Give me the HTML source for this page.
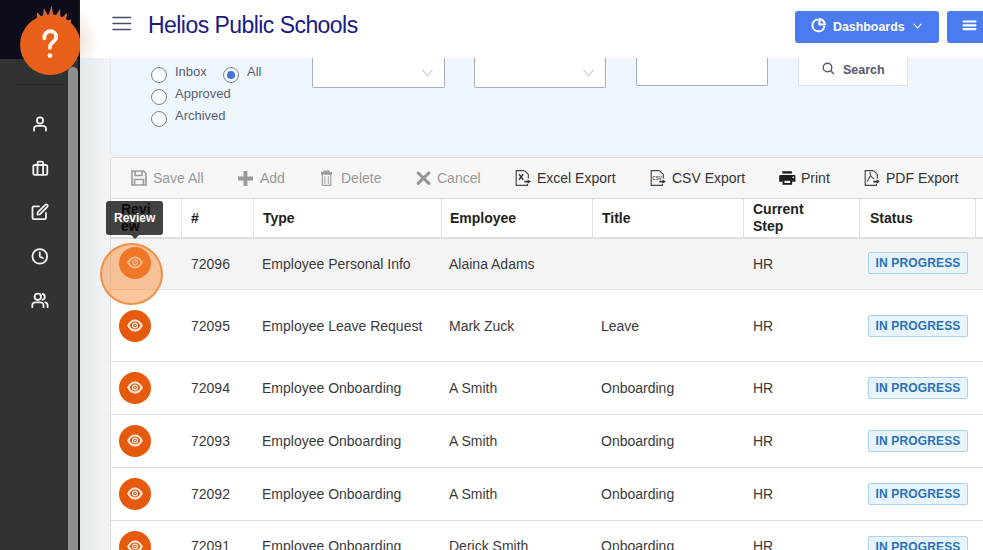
<!DOCTYPE html>
<html><head><meta charset="utf-8">
<style>
*{box-sizing:border-box;margin:0;padding:0}
html,body{width:983px;height:550px;overflow:hidden;background:#eff6fe;font-family:"Liberation Sans",sans-serif;position:relative}
.a{position:absolute}
#sbtop{left:0;top:0;width:80px;height:59px;background:#0d0c1a}
#sb{left:0;top:59px;width:68px;height:491px;background:#313332}
#sbdiv{left:15px;top:84px;width:49px;height:1px;background:#242626}
#scroll{left:68px;top:67px;width:10px;height:483px;background:#8b8f92;border-radius:5px 5px 0 0}
#scrolltrack{left:64px;top:59px;width:16px;height:491px;background:#313332}
#sbline{left:78px;top:0;width:2px;height:550px;background:#16181a}
#strip{left:80px;top:58px;width:31px;height:492px;background:linear-gradient(90deg,#e5eaed,#f1f4f6)}
#hdr{left:80px;top:0;width:903px;height:59px;background:#fff;border-bottom:1px solid #e4e7eb}
#title{left:148px;top:12px;font-size:23px;color:#181a86;white-space:nowrap;letter-spacing:-0.55px}
#dash{left:795px;top:11px;width:144px;height:32px;background:#4a7cef;border-radius:3px}
#dashtxt{left:833px;top:20px;color:#fff;font-weight:bold;font-size:12.4px;white-space:nowrap}
#menu2{left:947px;top:11px;width:50px;height:32px;background:#4a7cef;border-radius:3px}
.inp{background:#fff;border:1px solid #a7acc2;border-top:none;border-radius:0 0 2px 2px}
.rad{width:16px;height:16px;border-radius:50%;border:1px solid #7d819e;background:#fbfcfe}
.rlab{font-size:13px;color:#5a5f72;white-space:nowrap}
#panel{left:110px;top:58px;width:873px;height:98px;background:#eff6fe;border-radius:0 0 0 5px;border-left:1px solid #e1e8ef;border-bottom:1px solid #e1e8ef}
#grid{left:110px;top:157px;width:880px;height:400px;background:#fff;border:1px solid #dadada;border-radius:3px 0 0 0}
#tb{left:111px;top:158px;width:872px;height:41px;background:#f7f7f7;border-bottom:1px solid #dcdcdc}
.tbi{top:170px;font-size:14px;color:#333;white-space:nowrap}
.dis{color:#999}
.th{font-weight:bold;font-size:14px;color:#222;white-space:nowrap}
.td{font-size:14px;color:#3a3a3a;white-space:nowrap}
.vl{width:1px;background:#e2e2e2}
.hl{left:111px;width:872px;height:1px;background:#e0e0e0}
.badge{left:868px;width:100px;height:22px;background:#e8f4fc;border:1px solid #abd2ec;color:#2870b8;font-weight:bold;font-size:12px;letter-spacing:0.15px;text-align:center;line-height:20px;border-radius:2px}
.eye{left:119px;width:32px;height:32px;border-radius:50%;background:#e65a0e}
.eye svg{position:absolute;left:8px;top:9px}
</style></head><body>
<!-- sidebar -->
<div class="a" id="sbtop"></div>
<div class="a" id="sb"></div>
<div class="a" id="scrolltrack"></div>
<div class="a" id="sbdiv"></div>
<div class="a" id="scroll"></div>
<svg class="a" style="left:28px;top:110px" width="24" height="24" viewBox="0 0 24 24" fill="none" stroke="#f4f4f4" stroke-width="1.8" stroke-linecap="round"><circle cx="12" cy="10.5" r="3.1"/><path d="M6 20.5 V18.8 A3 3 0 0 1 9 15.8 H15 A3 3 0 0 1 18 18.8 V20.5"/></svg>
<svg class="a" style="left:28px;top:156px" width="24" height="24" viewBox="0 0 24 24" fill="none" stroke="#f4f4f4" stroke-width="1.8" stroke-linejoin="round"><rect x="5.3" y="9" width="14" height="9.8" rx="1.6"/><path d="M9.5 18.8 V7 A1.5 1.5 0 0 1 11 5.6 H13.6 A1.5 1.5 0 0 1 15.1 7 V18.8"/></svg>
<svg class="a" style="left:28px;top:200px" width="24" height="24" viewBox="0 0 24 24" fill="none" stroke="#f4f4f4" stroke-width="1.8" stroke-linecap="round" stroke-linejoin="round"><path d="M11 6.3 H6 A1.5 1.5 0 0 0 4.5 7.8 V17.7 A1.5 1.5 0 0 0 6 19.2 H16.5 A1.5 1.5 0 0 0 18 17.7 V13"/><path d="M9.5 14.6 L9.8 12.2 L17.3 4.8 A1.2 1.2 0 0 1 19.3 6.8 L11.8 14.3 Z"/></svg>
<svg class="a" style="left:28px;top:244px" width="24" height="24" viewBox="0 0 24 24" fill="none" stroke="#f4f4f4" stroke-width="1.8" stroke-linecap="round" stroke-linejoin="round"><circle cx="11.8" cy="12.4" r="7.3"/><path d="M11.8 8.4 V12.6 L14.8 14"/></svg>
<svg class="a" style="left:28px;top:288px" width="24" height="24" viewBox="0 0 24 24" fill="none" stroke="#f4f4f4" stroke-width="1.8" stroke-linecap="round"><circle cx="9.8" cy="8.8" r="3.2"/><path d="M14.5 5.8 A3.1 3.1 0 0 1 14.5 11.8"/><path d="M4.3 19.2 V17.3 A3 3 0 0 1 7.3 14.3 H12.5 A3 3 0 0 1 15.5 17.3 V19.2"/><path d="M17.3 14.4 A3 3 0 0 1 19.6 17.3 V19.2"/></svg>
<div class="a" id="sbline"></div>
<!-- help -->
<svg class="a" style="left:0;top:0" width="80" height="80" viewBox="0 0 80 80"><g fill="#c56a42"><path d="M41.86 17.05 L37.00 12.20 L36.85 19.07 Z"/><path d="M48.03 15.94 L44.00 8.10 L42.70 16.82 Z"/><path d="M53.80 16.13 L51.50 5.80 L48.41 15.92 Z"/><path d="M60.41 17.83 L60.20 8.70 L55.21 16.35 Z"/><path d="M65.97 20.74 L67.20 12.80 L61.22 18.16 Z"/><path d="M70.42 24.44 L71.30 19.20 L66.29 20.96 Z"/></g><circle cx="50.3" cy="44.8" r="30.2" fill="#e8601a"/><path d="M44.3 38.2 C44.3 33.6 46.8 31.3 50.3 31.3 C53.8 31.3 56.2 33.6 56.2 36.8 C56.2 40.2 53.6 41.5 51.8 43 C50.4 44.2 50 45.2 50 47.8" fill="none" stroke="#fff8f2" stroke-width="3.9" stroke-linecap="round"/><circle cx="50" cy="55.6" r="2.4" fill="#fff8f2"/></svg>
<!-- header -->
<div class="a" id="hdr"></div>
<div class="a" style="left:80px;top:0;width:18px;height:58px;background:radial-gradient(ellipse 18px 34px at 0 42px,rgba(232,212,198,0.6),rgba(255,255,255,0))"></div>
<div class="a" id="title">Helios Public Schools</div>
<svg class="a" style="left:112px;top:16px" width="20" height="15" viewBox="0 0 20 15"><g stroke="#4a4d68" stroke-width="1.6" stroke-linecap="round"><line x1="1" y1="1.5" x2="18.5" y2="1.5"/><line x1="1" y1="7.5" x2="18.5" y2="7.5"/><line x1="1" y1="13.5" x2="18.5" y2="13.5"/></g></svg>
<div class="a" id="dash"></div>
<svg class="a" style="left:811px;top:18px" width="15" height="15" viewBox="0 0 15 15"><path d="M6.8 1.4 A6 6 0 1 0 13.4 8" fill="none" stroke="#fff" stroke-width="2"/><path d="M8.4 6.5 V1.1 A5.4 5.4 0 0 1 13.8 6.5 Z" fill="none" stroke="#fff" stroke-width="2.2" stroke-linejoin="round"/></svg>
<div class="a" id="dashtxt">Dashboards</div>
<svg class="a" style="left:913px;top:23px" width="10" height="6" viewBox="0 0 10 6"><path d="M0.8 0.8 L4.6 5 L8.4 0.8" fill="none" stroke="#fff" stroke-width="1.1"/></svg>
<div class="a" id="menu2"></div>
<svg class="a" style="left:962px;top:20px" width="15" height="11" viewBox="0 0 15 11"><g stroke="#fff" stroke-width="2.2" stroke-linecap="round"><line x1="1.5" y1="1.5" x2="13.5" y2="1.5"/><line x1="1.5" y1="5.3" x2="13.5" y2="5.3"/><line x1="1.5" y1="9.1" x2="13.5" y2="9.1"/></g></svg>

<!-- left strip & filter panel -->
<div class="a" id="strip"></div>
<div class="a" id="panel"></div>
<div class="a rad" style="left:151px;top:67px"></div>
<div class="a rlab" style="left:175px;top:64px">Inbox</div>
<div class="a rad" style="left:223px;top:67px"></div>
<div class="a" style="left:227px;top:71px;width:8px;height:8px;border-radius:50%;background:#4174e2"></div>
<div class="a rlab" style="left:247px;top:64px">All</div>
<div class="a rad" style="left:151px;top:89px"></div>
<div class="a rlab" style="left:175px;top:86px">Approved</div>
<div class="a rad" style="left:151px;top:111px"></div>
<div class="a rlab" style="left:175px;top:108px">Archived</div>

<div class="a inp" style="left:312px;top:58px;width:133px;height:30px"></div>
<svg class="a" style="left:422px;top:69px" width="11" height="8" viewBox="0 0 11 8"><path d="M0.5 0.8 L5.5 6.8 L10.5 0.8" fill="none" stroke="#c6cad6" stroke-width="1.1"/></svg>
<div class="a inp" style="left:474px;top:58px;width:132px;height:30px"></div>
<svg class="a" style="left:583px;top:69px" width="11" height="8" viewBox="0 0 11 8"><path d="M0.5 0.8 L5.5 6.8 L10.5 0.8" fill="none" stroke="#c6cad6" stroke-width="1.1"/></svg>
<div class="a inp" style="left:636px;top:58px;width:132px;height:28px"></div>
<div class="a" style="left:798px;top:58px;width:110px;height:28px;background:#fff;border:1px solid #dfe4ec;border-top:none"></div>
<svg class="a" style="left:822px;top:62px" width="13" height="13" viewBox="0 0 13 13"><circle cx="5.5" cy="5.5" r="4.3" fill="none" stroke="#585c78" stroke-width="1.4"/><line x1="8.6" y1="8.6" x2="12" y2="12" stroke="#585c78" stroke-width="1.5"/></svg>
<div class="a" style="left:843px;top:63px;font-size:12.5px;font-weight:bold;color:#535770;white-space:nowrap">Search</div>

<!-- grid -->
<div class="a" id="grid"></div>
<div class="a" id="tb"></div>
<!-- toolbar -->
<svg class="a" style="left:131px;top:170px" width="16" height="16" viewBox="0 0 16 16" fill="none" stroke="#9a9a9a" stroke-width="1.6"><path d="M1 1 H12.5 L15 3.5 V15 H1 Z"/><path d="M4 1 V5.5 H11 V1"/><path d="M3.5 15 V9.5 H12.5 V15"/></svg>
<div class="a tbi dis" style="left:153px">Save All</div>
<svg class="a" style="left:238px;top:171px" width="15" height="15" viewBox="0 0 15 15"><path d="M5.6 0 H9.4 V5.6 H15 V9.4 H9.4 V15 H5.6 V9.4 H0 V5.6 H5.6 Z" fill="#999"/></svg>
<div class="a tbi dis" style="left:260px">Add</div>
<svg class="a" style="left:320px;top:169px" width="13" height="18" viewBox="0 0 13 18"><path d="M3.5 1.5 H9.5 V3 H3.5 Z" fill="#9c9c9c"/><path d="M1 2.8 H12 V5.8 H1 Z" fill="#9c9c9c"/><path d="M2.4 5.5 V16.4 H10.8 V5.5" fill="none" stroke="#a0a0a0" stroke-width="1.2"/><path d="M4.9 7.3 V15 M8.3 7.3 V15" stroke="#a4a4a4" stroke-width="1.1"/></svg>
<div class="a tbi dis" style="left:341px">Delete</div>
<svg class="a" style="left:416px;top:171px" width="15" height="15" viewBox="0 0 15 15"><path d="M2.2 2 L12.8 12.4 M12.8 2 L2.2 12.4" stroke="#959595" stroke-width="3.1" stroke-linecap="round"/></svg>
<div class="a tbi dis" style="left:437px">Cancel</div>
<svg class="a" style="left:515px;top:169px" width="17" height="18" viewBox="0 0 17 18"><path d="M9.5 1.6 H1.2 V16.3 H12.5 V15" fill="none" stroke="#444" stroke-width="1.15"/><path d="M9.5 1.6 L13.3 5.4 V9.6" fill="none" stroke="#444" stroke-width="1.15"/><path d="M9.3 12.6 H13" stroke="#333" stroke-width="1.7"/><path d="M12.6 10.4 L15.8 12.6 L12.6 14.8 Z" fill="#333"/><path d="M4 5.2 L8.2 10.8 M8.2 5.2 L4 10.8" stroke="#3a3a3a" stroke-width="1.5"/></svg>
<div class="a tbi" style="left:537px">Excel Export</div>
<svg class="a" style="left:650px;top:169px" width="17" height="18" viewBox="0 0 17 18"><path d="M9.5 1.6 H1.2 V16.3 H12.5 V15" fill="none" stroke="#444" stroke-width="1.15"/><path d="M9.5 1.6 L13.3 5.4 V9.6" fill="none" stroke="#444" stroke-width="1.15"/><path d="M9.3 12.6 H13" stroke="#333" stroke-width="1.7"/><path d="M12.6 10.4 L15.8 12.6 L12.6 14.8 Z" fill="#333"/><text x="2.3" y="10.6" font-size="4.6" font-family="Liberation Sans" font-weight="bold" fill="#555" textLength="9.5">CSV</text></svg>
<div class="a tbi" style="left:672px">CSV Export</div>
<svg class="a" style="left:778px;top:170px" width="18" height="16" viewBox="0 0 18 16"><path d="M4.3 1.2 H13.9 V3.6 H4.3 Z" fill="#1e1e1e"/><path d="M2.4 5 H16.2 A1.2 1.2 0 0 1 17.4 6.2 V11.7 H14.1 V10 H4.5 V11.7 H1.2 V6.2 A1.2 1.2 0 0 1 2.4 5 Z" fill="#1e1e1e"/><circle cx="15.3" cy="7.3" r="0.9" fill="#f7f7f7"/><path d="M4.5 10 H14.1 V14.8 H4.5 Z" fill="#1e1e1e"/><path d="M6.4 10.8 H12.2 V13 H6.4 Z" fill="#f7f7f7"/></svg>
<div class="a tbi" style="left:801px">Print</div>
<svg class="a" style="left:864px;top:169px" width="17" height="18" viewBox="0 0 17 18"><path d="M9.5 1.6 H1.2 V16.3 H12.5 V15" fill="none" stroke="#444" stroke-width="1.15"/><path d="M9.5 1.6 L13.3 5.4 V9.6" fill="none" stroke="#444" stroke-width="1.15"/><path d="M9.3 12.6 H13" stroke="#333" stroke-width="1.7"/><path d="M12.6 10.4 L15.8 12.6 L12.6 14.8 Z" fill="#333"/><path d="M3.2 12.6 L6.5 6.5 C6.2 4.8 6 3.8 6.2 2.8 M6.5 6.5 C7.5 8.2 8.5 9.3 10.5 10" fill="none" stroke="#555" stroke-width="1.2"/></svg>
<div class="a tbi" style="left:886px">PDF Export</div>

<!-- header row -->
<div class="a vl" style="left:181px;top:199px;height:39px"></div>
<div class="a vl" style="left:253px;top:199px;height:39px"></div>
<div class="a vl" style="left:441px;top:199px;height:39px"></div>
<div class="a vl" style="left:592px;top:199px;height:39px"></div>
<div class="a vl" style="left:743px;top:199px;height:39px"></div>
<div class="a vl" style="left:859px;top:199px;height:39px"></div>
<div class="a vl" style="left:975px;top:199px;height:39px"></div>
<div class="a" style="left:111px;top:237px;width:872px;height:2px;background:#dedede"></div>
<div class="a th" style="left:121px;top:201px;line-height:17px;font-size:14px">Revi<br>ew</div>
<div class="a th" style="left:191px;top:210px">#</div>
<div class="a th" style="left:263px;top:210px">Type</div>
<div class="a th" style="left:450px;top:210px">Employee</div>
<div class="a th" style="left:602px;top:210px">Title</div>
<div class="a th" style="left:753px;top:201px;line-height:17px">Current<br>Step</div>
<div class="a th" style="left:870px;top:210px">Status</div>

<!-- rows -->
<div class="a" style="left:111px;top:239px;width:872px;height:50px;background:#f4f4f4"></div>
<div class="a hl" style="top:289px"></div>
<div class="a hl" style="top:361px"></div>
<div class="a hl" style="top:414px"></div>
<div class="a hl" style="top:467px"></div>
<div class="a hl" style="top:520px"></div>
<div class="a eye" style="top:247px"><svg width="16" height="13" viewBox="0 0 16 13" fill="none" stroke="#fde6d3" stroke-width="2.2"><path d="M1.3 6.5 C3 3 5.5 1.5 8 1.5 C10.5 1.5 13 3 14.7 6.5 C13 10 10.5 11.5 8 11.5 C5.5 11.5 3 10 1.3 6.5 Z"/><circle cx="8" cy="6.5" r="2.4" stroke-width="1.3" stroke="#fde6d3" fill="#8a5a40"/><circle cx="8" cy="6.5" r="0.9" fill="#fde6d3" stroke="none"/></svg></div>
<div class="a td" style="left:191px;top:256px">72096</div>
<div class="a td" style="left:262px;top:256px">Employee Personal Info</div>
<div class="a td" style="left:449px;top:256px">Alaina Adams</div>
<div class="a td" style="left:753px;top:256px">HR</div>
<div class="a badge" style="top:252px">IN PROGRESS</div>
<div class="a eye" style="top:310px"><svg width="16" height="13" viewBox="0 0 16 13" fill="none" stroke="#fde6d3" stroke-width="2.2"><path d="M1.3 6.5 C3 3 5.5 1.5 8 1.5 C10.5 1.5 13 3 14.7 6.5 C13 10 10.5 11.5 8 11.5 C5.5 11.5 3 10 1.3 6.5 Z"/><circle cx="8" cy="6.5" r="2.4" stroke-width="1.3" stroke="#fde6d3" fill="#8a5a40"/><circle cx="8" cy="6.5" r="0.9" fill="#fde6d3" stroke="none"/></svg></div>
<div class="a td" style="left:191px;top:318px">72095</div>
<div class="a td" style="left:262px;top:318px">Employee Leave Request</div>
<div class="a td" style="left:449px;top:318px">Mark Zuck</div>
<div class="a td" style="left:601px;top:318px">Leave</div>
<div class="a td" style="left:753px;top:318px">HR</div>
<div class="a badge" style="top:315px">IN PROGRESS</div>
<div class="a eye" style="top:372px"><svg width="16" height="13" viewBox="0 0 16 13" fill="none" stroke="#fde6d3" stroke-width="2.2"><path d="M1.3 6.5 C3 3 5.5 1.5 8 1.5 C10.5 1.5 13 3 14.7 6.5 C13 10 10.5 11.5 8 11.5 C5.5 11.5 3 10 1.3 6.5 Z"/><circle cx="8" cy="6.5" r="2.4" stroke-width="1.3" stroke="#fde6d3" fill="#8a5a40"/><circle cx="8" cy="6.5" r="0.9" fill="#fde6d3" stroke="none"/></svg></div>
<div class="a td" style="left:191px;top:380px">72094</div>
<div class="a td" style="left:262px;top:380px">Employee Onboarding</div>
<div class="a td" style="left:449px;top:380px">A Smith</div>
<div class="a td" style="left:601px;top:380px">Onboarding</div>
<div class="a td" style="left:753px;top:380px">HR</div>
<div class="a badge" style="top:377px">IN PROGRESS</div>
<div class="a eye" style="top:425px"><svg width="16" height="13" viewBox="0 0 16 13" fill="none" stroke="#fde6d3" stroke-width="2.2"><path d="M1.3 6.5 C3 3 5.5 1.5 8 1.5 C10.5 1.5 13 3 14.7 6.5 C13 10 10.5 11.5 8 11.5 C5.5 11.5 3 10 1.3 6.5 Z"/><circle cx="8" cy="6.5" r="2.4" stroke-width="1.3" stroke="#fde6d3" fill="#8a5a40"/><circle cx="8" cy="6.5" r="0.9" fill="#fde6d3" stroke="none"/></svg></div>
<div class="a td" style="left:191px;top:433px">72093</div>
<div class="a td" style="left:262px;top:433px">Employee Onboarding</div>
<div class="a td" style="left:449px;top:433px">A Smith</div>
<div class="a td" style="left:601px;top:433px">Onboarding</div>
<div class="a td" style="left:753px;top:433px">HR</div>
<div class="a badge" style="top:430px">IN PROGRESS</div>
<div class="a eye" style="top:478px"><svg width="16" height="13" viewBox="0 0 16 13" fill="none" stroke="#fde6d3" stroke-width="2.2"><path d="M1.3 6.5 C3 3 5.5 1.5 8 1.5 C10.5 1.5 13 3 14.7 6.5 C13 10 10.5 11.5 8 11.5 C5.5 11.5 3 10 1.3 6.5 Z"/><circle cx="8" cy="6.5" r="2.4" stroke-width="1.3" stroke="#fde6d3" fill="#8a5a40"/><circle cx="8" cy="6.5" r="0.9" fill="#fde6d3" stroke="none"/></svg></div>
<div class="a td" style="left:191px;top:486px">72092</div>
<div class="a td" style="left:262px;top:486px">Employee Onboarding</div>
<div class="a td" style="left:449px;top:486px">A Smith</div>
<div class="a td" style="left:601px;top:486px">Onboarding</div>
<div class="a td" style="left:753px;top:486px">HR</div>
<div class="a badge" style="top:483px">IN PROGRESS</div>
<div class="a eye" style="top:531px"><svg width="16" height="13" viewBox="0 0 16 13" fill="none" stroke="#fde6d3" stroke-width="2.2"><path d="M1.3 6.5 C3 3 5.5 1.5 8 1.5 C10.5 1.5 13 3 14.7 6.5 C13 10 10.5 11.5 8 11.5 C5.5 11.5 3 10 1.3 6.5 Z"/><circle cx="8" cy="6.5" r="2.4" stroke-width="1.3" stroke="#fde6d3" fill="#8a5a40"/><circle cx="8" cy="6.5" r="0.9" fill="#fde6d3" stroke="none"/></svg></div>
<div class="a td" style="left:191px;top:538px">72091</div>
<div class="a td" style="left:262px;top:538px">Employee Onboarding</div>
<div class="a td" style="left:449px;top:538px">Derick Smith</div>
<div class="a td" style="left:601px;top:538px">Onboarding</div>
<div class="a td" style="left:753px;top:538px">HR</div>
<div class="a badge" style="top:536px">IN PROGRESS</div>

<!-- tooltip & highlight -->
<div class="a" style="left:106px;top:201px;width:57px;height:34px;background:rgba(0,0,0,0.74);border-radius:3px"></div>
<div class="a" style="left:131px;top:235px;width:0;height:0;border-left:4px solid transparent;border-right:4px solid transparent;border-top:4px solid rgba(0,0,0,0.74)"></div>
<div class="a" style="left:114px;top:211px;font-size:12px;font-weight:bold;color:#fff;white-space:nowrap">Review</div>
<div class="a" style="left:100px;top:243px;width:63px;height:62px;border-radius:50%;background:rgba(250,145,65,0.52);border:2.6px solid #f0914a"></div>
</body></html>
